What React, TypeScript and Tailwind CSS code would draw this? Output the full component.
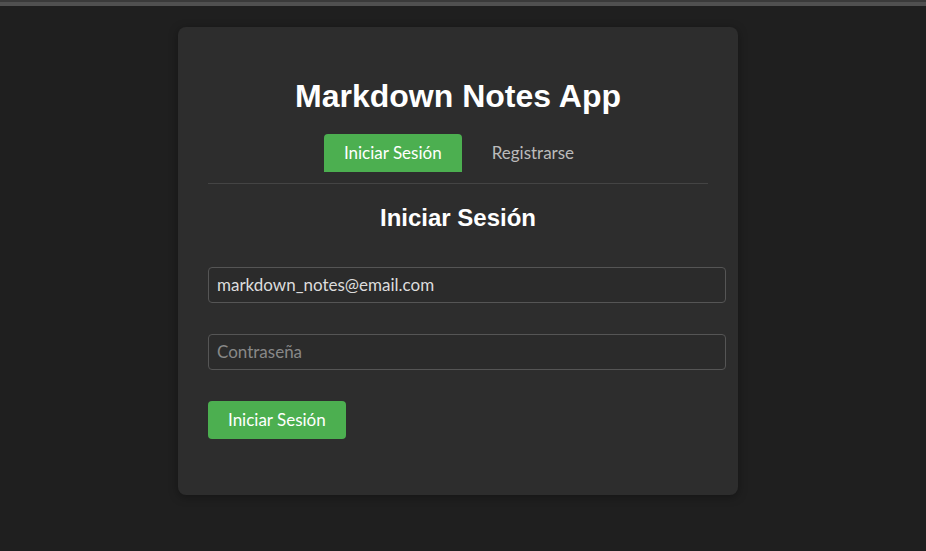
import { useState } from "react";

export default function App() {
  const [tab, setTab] = useState<"login" | "register">("login");
  const [email, setEmail] = useState("markdown_notes@email.com");
  const [password, setPassword] = useState("");

  return (
    <div className="min-h-[551px] bg-[#1f1f1f] font-['Lato',sans-serif]">
      {/* top strip */}
      <div className="h-[2px] bg-[#3a3a3a]" />
      <div className="h-[4px] bg-[#505050]" />

      <div className="flex justify-center pr-[10px] pt-[21px]">
        <div className="w-[560px] rounded-lg bg-[#2d2d2d] px-[30px] pt-[30px] pb-[56px] shadow-[0_2px_10px_rgba(0,0,0,0.35)]">
          <h1 className="mt-[21px] text-center font-['Liberation_Sans',Arial,sans-serif] text-[32px] leading-[37px] font-bold text-white">
            Markdown Notes App
          </h1>

          {/* Tabs */}
          <div className="mt-[19px] flex justify-center pl-[2px]">
            <button
              onClick={() => setTab("login")}
              className={`h-[38px] rounded-t px-5 text-[17px] ${
                tab === "login" ? "bg-[#4caf50] text-white" : "text-[#bbbbbb]"
              }`}
            >
              Iniciar Sesión
            </button>
            <button
              onClick={() => setTab("register")}
              className={`ml-[10px] h-[38px] rounded-t px-5 text-[17px] ${
                tab === "register" ? "bg-[#4caf50] text-white" : "text-[#bbbbbb]"
              }`}
            >
              Registrarse
            </button>
          </div>
          <div className="mt-[11px] h-px bg-[#444444]" />

          <h2 className="mt-[20px] text-center font-['Liberation_Sans',Arial,sans-serif] text-2xl leading-[28px] font-bold text-white">
            {tab === "login" ? "Iniciar Sesión" : "Registrarse"}
          </h2>

          <form className="mt-[35px]" onSubmit={(e) => e.preventDefault()}>
            <input
              type="email"
              value={email}
              onChange={(e) => setEmail(e.target.value)}
              placeholder="Correo electrónico"
              className="box-content block h-[20px] w-full rounded border border-[#555555] bg-[#2b2b2b] px-2 py-[7px] text-[17px] text-[#dddddd] placeholder:text-[#888888] focus:outline-none"
            />
            <input
              type="password"
              value={password}
              onChange={(e) => setPassword(e.target.value)}
              placeholder="Contraseña"
              className="mt-[31px] box-content block h-[20px] w-full rounded border border-[#555555] bg-[#2b2b2b] px-2 py-[7px] text-[17px] text-[#dddddd] placeholder:text-[#888888] focus:outline-none"
            />
            <button
              type="submit"
              className="mt-[31px] h-[38px] rounded bg-[#4caf50] px-5 text-[17px] text-white"
            >
              {tab === "login" ? "Iniciar Sesión" : "Registrarse"}
            </button>
          </form>
        </div>
      </div>
    </div>
  );
}
